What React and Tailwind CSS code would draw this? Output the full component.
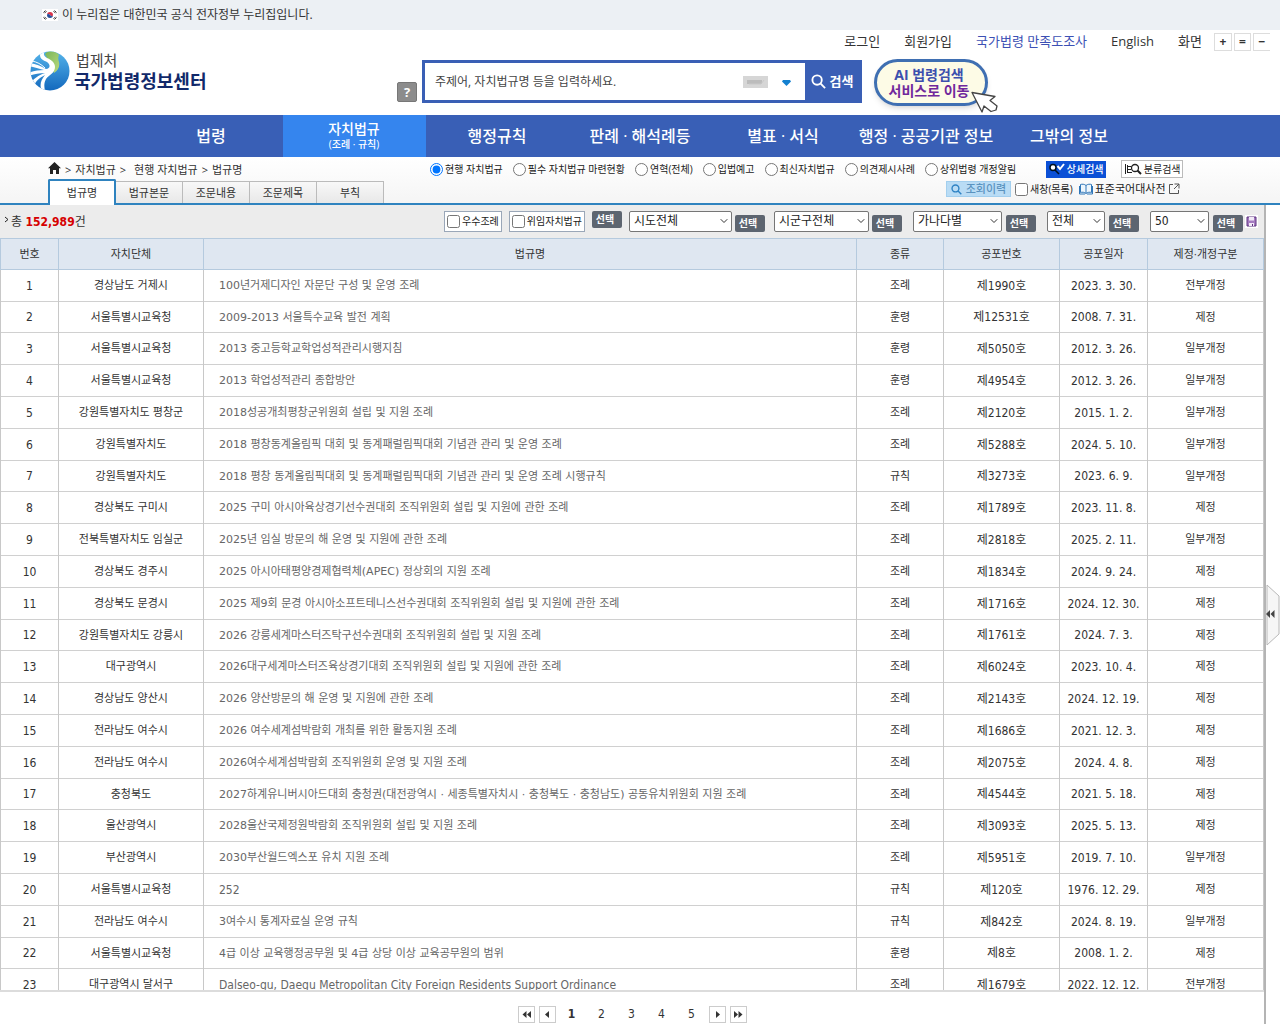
import React from 'react';
import { ChevronDown } from 'lucide-react';

const NAV = ['법령', '자치법규', '행정규칙', '판례 · 해석례등', '별표 · 서식', '행정 · 공공기관 정보', '그밖의 정보'];

const TABS = ['법규명', '법규본문', '조문내용', '조문제목', '부칙'];

const SCOPES = ['현행 자치법규', '필수 자치법규 마련현황', '연혁(전체)', '입법예고', '최신자치법규', '의견제시사례', '상위법령 개정알림'];

const ROWS = [
  ['경상남도 거제시', '100년거제디자인 자문단 구성 및 운영 조례', '조례', '제1990호', '2023. 3. 30.', '전부개정'],
  ['서울특별시교육청', '2009-2013 서울특수교육 발전 계획', '훈령', '제12531호', '2008. 7. 31.', '제정'],
  ['서울특별시교육청', '2013 중고등학교학업성적관리시행지침', '훈령', '제5050호', '2012. 3. 26.', '일부개정'],
  ['서울특별시교육청', '2013 학업성적관리 종합방안', '훈령', '제4954호', '2012. 3. 26.', '일부개정'],
  ['강원특별자치도 평창군', '2018성공개최평창군위원회 설립 및 지원 조례', '조례', '제2120호', '2015. 1. 2.', '일부개정'],
  ['강원특별자치도', '2018 평창동계올림픽 대회 및 동계패럴림픽대회 기념관 관리 및 운영 조례', '조례', '제5288호', '2024. 5. 10.', '일부개정'],
  ['강원특별자치도', '2018 평창 동계올림픽대회 및 동계패럴림픽대회 기념관 관리 및 운영 조례 시행규칙', '규칙', '제3273호', '2023. 6. 9.', '일부개정'],
  ['경상북도 구미시', '2025 구미 아시아육상경기선수권대회 조직위원회 설립 및 지원에 관한 조례', '조례', '제1789호', '2023. 11. 8.', '제정'],
  ['전북특별자치도 임실군', '2025년 임실 방문의 해 운영 및 지원에 관한 조례', '조례', '제2818호', '2025. 2. 11.', '일부개정'],
  ['경상북도 경주시', '2025 아시아태평양경제협력체(APEC) 정상회의 지원 조례', '조례', '제1834호', '2024. 9. 24.', '제정'],
  ['경상북도 문경시', '2025 제9회 문경 아시아소프트테니스선수권대회 조직위원회 설립 및 지원에 관한 조례', '조례', '제1716호', '2024. 12. 30.', '제정'],
  ['강원특별자치도 강릉시', '2026 강릉세계마스터즈탁구선수권대회 조직위원회 설립 및 지원 조례', '조례', '제1761호', '2024. 7. 3.', '제정'],
  ['대구광역시', '2026대구세계마스터즈육상경기대회 조직위원회 설립 및 지원에 관한 조례', '조례', '제6024호', '2023. 10. 4.', '제정'],
  ['경상남도 양산시', '2026 양산방문의 해 운영 및 지원에 관한 조례', '조례', '제2143호', '2024. 12. 19.', '제정'],
  ['전라남도 여수시', '2026 여수세계섬박람회 개최를 위한 활동지원 조례', '조례', '제1686호', '2021. 12. 3.', '제정'],
  ['전라남도 여수시', '2026여수세계섬박람회 조직위원회 운영 및 지원 조례', '조례', '제2075호', '2024. 4. 8.', '제정'],
  ['충청북도', '2027하계유니버시아드대회 충청권(대전광역시 · 세종특별자치시 · 충청북도 · 충청남도) 공동유치위원회 지원 조례', '조례', '제4544호', '2021. 5. 18.', '제정'],
  ['울산광역시', '2028울산국제정원박람회 조직위원회 설립 및 지원 조례', '조례', '제3093호', '2025. 5. 13.', '제정'],
  ['부산광역시', '2030부산월드엑스포 유치 지원 조례', '조례', '제5951호', '2019. 7. 10.', '일부개정'],
  ['서울특별시교육청', '252', '규칙', '제120호', '1976. 12. 29.', '제정'],
  ['전라남도 여수시', '3여수시 통계자료실 운영 규칙', '규칙', '제842호', '2024. 8. 19.', '일부개정'],
  ['서울특별시교육청', '4급 이상 교육행정공무원 및 4급 상당 이상 교육공무원의 범위', '훈령', '제8호', '2008. 1. 2.', '제정'],
  ['대구광역시 달서구', 'Dalseo-gu, Daegu Metropolitan City Foreign Residents Support Ordinance', '조례', '제1679호', '2022. 12. 12.', '전부개정'],
];

const hasHangul = (text) => /[가-힣]/.test(text);

const Flag = () => (
  <svg width="16" height="12" viewBox="0 0 16 12" aria-hidden="true">
    <rect width="16" height="12" fill="#fff" />
    <path d="M5 6a3 3 0 0 1 6 0c0 1.5-2 1.5-3 0s-3-1.500-3 0z" fill="#d8354a" />
    <path d="M5 6c0-1.500 2-1.500 3 0s3 1.500 3 0a3 3 0 0 1-6 0z" fill="#27509b" />
    <path d="M1.500 3.500l2-2M2.500 4.200l2-2M12.500 1.500l2 2M11.500 2.200l2 2M1.500 8.500l2 2M2.500 7.800l2 2M12.500 10.500l2-2M11.500 9.800l2-2" stroke="#222" strokeWidth="0.900" />
  </svg>
);

const Emblem = () => (
  <svg width="40" height="40" viewBox="0 0 40 40" aria-hidden="true">
    <defs>
      <linearGradient id="sea" x1="0" y1="0" x2="0" y2="1">
        <stop offset="0" stopColor="#55b4ea" />
        <stop offset="1" stopColor="#1268bd" />
      </linearGradient>
      <linearGradient id="leaf" x1="0" y1="0" x2="1" y2="1">
        <stop offset="0" stopColor="#79b558" />
        <stop offset="1" stopColor="#b9d97e" />
      </linearGradient>
      <clipPath id="disc"><circle cx="20" cy="20" r="19.500" /></clipPath>
    </defs>
    <g clipPath="url(#disc)">
      <rect width="40" height="40" fill="url(#sea)" />
      <path d="M15 3C18-1 25-1 29 4c-1 2-1 4 0 7 1 5-1 8-5 11l-3-8z" fill="url(#leaf)" />
      <path d="M16-1c-3 3-3 6 1 8 5 2 8 5 8 9 0 6-6 8-9 12-2 4-2 7-1 12h-3c-3-6-1-11 3-16-6 3-9 6-11 11l-3-3c3-5 8-8 14-10-6 0-11 1-16 3l-1-3c5-2 11-3 16-3C10 18 5 16-1 15l1-3c6 1 11 3 16 6 4 0 5-4 1-7-4-2-7-3-7-7 0-2 2-4 4-5z" fill="#fff" />
      <path d="M2 10c5 1 9 3 13 7" stroke="#fff" strokeWidth="1" fill="none" />
    </g>
  </svg>
);

const SearchGlyph = ({ className }) => (
  <svg className={className} viewBox="0 0 16 16" fill="none" stroke="currentColor" strokeWidth="2" aria-hidden="true">
    <circle cx="6.500" cy="6.500" r="5" />
    <path d="M10.300 10.300L15 15" />
  </svg>
);

const SelectBtn = ({ raised }) => (
  <button className={`h-[17px] w-[30px] rounded-xs bg-[#5d6570] pr-1 text-[10px] leading-[15px] font-bold text-white ${raised ? 'mb-1' : '-mb-1'}`}>
    선택
  </button>
);

const Dropdown = ({ label, value, className }) => (
  <div className={`relative ${className}`}>
    <select aria-label={label} className="block h-[21px] w-full appearance-none rounded-xs border border-[#767676] bg-white pl-1 text-xs leading-[17px] text-[#222]">
      <option>{value}</option>
    </select>
    <ChevronDown className="pointer-events-none absolute top-1 right-0.5 h-3 w-3 text-[#333]" strokeWidth={2} />
  </div>
);

const Arrow = ({ double, flip }) => (
  <svg width="9" height="7" viewBox="0 0 9 7" fill="#333" className={flip ? 'rotate-180' : ''} aria-hidden="true">
    {double ? <path d="M4.500 0v7L0.500 3.500zM9 0v7L5 3.500z" /> : <path d="M6 0v7L2 3.500z" />}
  </svg>
);

const PageBtn = ({ label, double, flip, className }) => (
  <button aria-label={label} className={`flex h-[17px] w-[17px] items-center justify-center border border-[#ccc] bg-white ${className || ''}`}>
    <Arrow double={double} flip={flip} />
  </button>
);

const Header = () => (
  <header className="flex h-[85px] shrink-0 pr-2.5 pl-[30px]">
    <a href="#home" className="mt-[21px] flex w-[367px] shrink-0 items-start">
      <Emblem />
      <span className="ml-1 flex flex-col text-[#12296a]">
        <span className="pl-0.5 text-[15px] leading-[18px] text-[#444]">법제처</span>
        <span className="text-lg leading-6 font-bold">국가법령정보센터</span>
      </span>
    </a>
    <div className="flex flex-1 flex-col">
      <nav className="flex h-[23px] items-center justify-end text-[13px] text-[#333]">
        <a href="#login">로그인</a>
        <a href="#join" className="ml-6">회원가입</a>
        <a href="#survey" className="ml-6 text-[#3c50b4]">국가법령 만족도조사</a>
        <a href="#en" className="ml-6">English</a>
        <span className="mr-3 ml-6">화면</span>
        <span className="flex gap-0.5 text-xs font-bold">
          <button aria-label="확대" className="h-[18px] w-[18px] border border-[#ddd] leading-none">+</button>
          <button aria-label="기본" className="h-[18px] w-[17px] border border-[#ddd] leading-none">=</button>
          <button aria-label="축소" className="h-[18px] w-[17px] border border-r-0 border-[#ddd] leading-none">−</button>
        </span>
      </nav>
      <div className="mt-1.5 flex">
        <button aria-label="도움말" className="mt-[23px] mr-[5px] h-5 w-5 rounded-xs border border-[#777] bg-[#8c8c8c] text-[13px] leading-none font-bold text-white">?</button>
        <form className="mt-px flex h-[43px] w-[440px] border-3 border-[#3a5fb5] bg-white">
          <input aria-label="검색어" placeholder="주제어, 자치법규명 등을 입력하세요." className="min-w-0 flex-1 pl-2.5 text-xs text-[#333] outline-none placeholder:text-[#444]" />
          <button type="button" aria-label="키보드" className="mt-[13px] h-3 w-[25px] bg-[#d6d6d6]">
            <svg width="25" height="12" viewBox="0 0 25 12" aria-hidden="true">
              <path d="M4 4h15v4H4z" fill="#bcbcbc" /><path d="M6 8h12l3-4" stroke="#c8c8c8" fill="none" />
            </svg>
          </button>
          <button type="button" aria-label="펼치기" className="mr-3.5 ml-3.5 pt-0.5">
            <svg width="9" height="6" viewBox="0 0 9 6" aria-hidden="true"><path d="M1 0h7l1 1.500L4.500 6 0 1.500z" fill="#1380d0" /></svg>
          </button>
          <button type="button" className="flex w-[54px] items-center justify-center gap-1 bg-[#3a5fb5] text-[13px] font-bold text-white">
            <SearchGlyph className="h-[15px] w-[15px]" />
            검색
          </button>
        </form>
        <button className="relative ml-3 h-[47px] w-[114px] rounded-full border-3 border-[#3f6fb2] bg-[#fdfbe6] pr-1 text-sm leading-4 font-bold shadow-md">
          <span className="block text-[#3c4fae]">AI 법령검색</span>
          <span className="block text-[#70289c]">서비스로 이동</span>
          <svg className="absolute -right-3.5 -bottom-2.5" width="28" height="22" viewBox="0 0 28 22" aria-hidden="true">
            <path d="M1 1.500L24 5.500l-5 4 7 5.500-1 4-5 1.500-7-5.500-2 6z" fill="#fff" stroke="#444" strokeWidth="1.300" strokeLinejoin="round" />
          </svg>
        </button>
      </div>
    </div>
  </header>
);

const MainNav = () => (
  <nav className="flex h-[42px] shrink-0 justify-center bg-[#395fb6] text-base text-white">
    {NAV.map((name) =>
      name === '자치법규' ? (
        <a key={name} href="#ordin" className="flex w-[143px] flex-col items-center justify-center bg-[#3585ee] text-sm leading-4 font-medium">
          {name}
          <span className="text-[10px] leading-[14px]">(조례 · 규칙)</span>
        </a>
      ) : (
        <a key={name} href="#menu" className="flex w-[143px] items-center justify-center font-medium whitespace-nowrap">
          {name}
        </a>
      )
    )}
  </nav>
);

const SubBar = () => (
  <section className="flex h-12 shrink-0 justify-between border-b-2 border-[#2f83bf] bg-gradient-to-b from-white to-[#f5f5f5]">
    <div className="flex w-[384px] shrink-0 flex-col pl-12 text-[11px] text-[#333]">
      <div className="flex h-[22px] shrink-0 items-center gap-1 pt-1">
        <svg width="13" height="12" viewBox="0 0 13 12" fill="#222" className="mb-1" aria-label="홈">
          <path d="M6.500 0L13 6.200h-2V12H8V8H5v4H2V6.200H0z" />
        </svg>
        <span>&gt;</span><a href="#a">자치법규</a><span>&gt;</span>
        <a href="#b" className="pl-1">현행 자치법규</a><span>&gt;</span><a href="#c">법규명</a>
      </div>
      <div className="flex h-[26px] shrink-0 items-end">
        {TABS.map((tab, i) => (
          <button
            key={tab}
            className={i === 0
              ? 'h-[26px] w-[68px] shrink-0 rounded-t-xs border-2 border-b-0 border-[#2f83bf] bg-white'
              : 'mb-0.5 h-[22px] w-[67px] shrink-0 border-t border-r border-[#bbb] bg-gradient-to-b from-[#f8f8f8] to-[#e8e8e8] pt-0.5'}
          >
            {tab}
          </button>
        ))}
      </div>
    </div>
    <div className="flex flex-1 flex-col pl-[46px]">
      <div className="flex h-6 items-center text-[10px] whitespace-nowrap text-[#222]">
        {SCOPES.map((scope, i) => (
          <label key={scope} className="mr-2.5 flex items-center gap-0.5">
            <input type="radio" name="scope" defaultChecked={i === 0} className="h-[13px] w-[13px]" />
            {scope}
          </label>
        ))}
        <button className="ml-5 flex h-[17px] w-[60px] items-center justify-center gap-0.5 bg-[#0b50d6] font-medium text-white">
          <svg width="16" height="12" viewBox="0 0 16 12" fill="none" aria-hidden="true">
            <circle cx="4" cy="4.500" r="3" stroke="#012" strokeWidth="1.500" fill="#fff" /><path d="M6 7l4 4" stroke="#012" strokeWidth="1.600" />
            <path d="M8.500 3l2.500 3 4-5" stroke="#fff" strokeWidth="2" />
          </svg>
          상세검색
        </button>
        <button className="ml-[15px] flex h-[18px] w-[62px] items-center justify-center gap-px border border-[#bbb] bg-white">
          <svg width="19" height="12" viewBox="0 0 19 12" fill="none" stroke="#222" aria-hidden="true">
            <path d="M1.500 1v10M3.500 2v8M3.500 3.500H7M3.500 6.500H7M3.500 9.500H8" />
            <circle cx="11" cy="5" r="3.500" strokeWidth="1.300" /><path d="M13.500 7.500L17 11" strokeWidth="2" />
          </svg>
          분류검색
        </button>
      </div>
      <div className="ml-[516px] flex h-4 items-center text-[11px] whitespace-nowrap text-[#222]">
        <button className="flex h-4 w-[65px] items-center justify-center gap-1 border border-[#a3cfee] bg-[#b9dcf5] font-medium text-[#5b93bf]">
          <SearchGlyph className="h-[11px] w-[11px] text-[#2f83c4]" />
          조회이력
        </button>
        <label className="ml-1 flex items-center gap-0.5 text-[10px]">
          <input type="checkbox" className="h-[13px] w-[13px]" />
          새창(목록)
        </label>
        <a href="#dict" className="ml-1.5 flex items-center">
          <svg width="14" height="12" viewBox="0 0 14 12" fill="#eef6fc" stroke="#2f76b8" className="mr-0.5" aria-hidden="true">
            <path d="M7 2.500C5.500 1 3 1 1.500 1.500v8C3 9 5.500 9 7 10.500 8.500 9 11 9 12.500 9.500v-8C11 1 8.500 1 7 2.500zM7 2.500v8M0.500 3v8H6M13.500 3v8H8" />
          </svg>
          표준국어대사전
          <svg width="12" height="12" viewBox="0 0 12 12" fill="none" stroke="#555" className="ml-0.5" aria-hidden="true">
            <path d="M5 1.500H1.500v9h9V7M6.500 1H11v4.500M11 1L6 6" />
          </svg>
        </a>
      </div>
    </div>
  </section>
);

const Toolbar = () => (
  <div className="flex h-[33px] shrink-0 items-center justify-between bg-[#ececec] pr-1.5 pl-1">
    <p className="flex items-center text-xs text-[#333]">
      <svg width="5" height="7" viewBox="0 0 5 7" fill="none" stroke="#222" className="mr-0.5 mb-1" aria-hidden="true"><path d="M1 1l3 2.500L1 6" /></svg>
      총&nbsp;<strong className="text-[#d60000]">152,989</strong>건
    </p>
    <div className="flex items-center text-[10px] whitespace-nowrap text-[#222]">
      <label className="flex h-[21px] items-center gap-0.5 border border-[#9aa7b8] bg-white px-0.5">
        <input type="checkbox" className="h-[13px] w-[13px]" />우수조례
      </label>
      <label className="mx-[7px] flex h-[21px] items-center gap-0.5 border border-[#9aa7b8] bg-white px-0.5">
        <input type="checkbox" className="h-[13px] w-[13px]" />위임자치법규
      </label>
      <SelectBtn raised />
      <Dropdown label="시도" value="시도전체" className="mr-[3px] ml-[7px] w-[103px]" />
      <SelectBtn />
      <Dropdown label="시군구" value="시군구전체" className="mr-[3px] ml-[9px] w-[95px]" />
      <SelectBtn />
      <Dropdown label="가나다" value="가나다별" className="mr-1 ml-[11px] w-[89px]" />
      <SelectBtn />
      <Dropdown label="종류" value="전체" className="mr-1 ml-[11px] w-[58px]" />
      <SelectBtn />
      <Dropdown label="목록수" value="50" className="mr-1 ml-[11px] w-[59px]" />
      <SelectBtn />
      <button aria-label="저장" className="ml-0.5">
        <svg width="13" height="13" viewBox="0 0 13 13" aria-hidden="true">
          <rect width="13" height="13" fill="#fff" />
          <path d="M2 2h9v9H2z" fill="#a57bc0" stroke="#5c3380" /><path d="M4 2h5v3.500H4zM4 8h5v3H4z" fill="#f1e9f6" /><path d="M7 9h1v2H7z" fill="#5c3380" />
        </svg>
      </button>
    </div>
  </div>
);

const List = () => (
  <div className="min-h-0 flex-1 overflow-hidden border-b-2 border-[#dcdcdc]">
    <table className="w-full table-fixed border-collapse text-[11px] text-[#333]">
      <colgroup>
        <col className="w-[58px]" />
        <col className="w-[145px]" />
        <col />
        <col className="w-[87px]" />
        <col className="w-[116px]" />
        <col className="w-[88px]" />
        <col className="w-[116px]" />
      </colgroup>
      <thead>
        <tr className="h-[31px] border-y border-[#b5cade] bg-[#dfe7f1]">
          {['번호', '자치단체', '법규명', '종류', '공포번호', '공포일자', '제정·개정구분'].map((h) => (
            <th key={h} scope="col" className="border-x border-[#b5cade] p-0 pt-0.5 font-normal">{h}</th>
          ))}
        </tr>
      </thead>
      <tbody>
        {ROWS.map(([org, title, kind, no, date, change], i) => (
          <tr key={no} className="h-8 border-b border-[#d0d0d0] text-center nth-[5n+2]:h-[31px] [&>td]:border-x [&>td]:border-[#c8c8c8] [&>td]:p-0">
            <td className="text-xs">{i + 1}</td>
            <td><span className="block pt-0.5">{org}</span></td>
            <td className="text-left text-[#666]">
              <a
                href="#view"
                className={hasHangul(title)
                  ? "block truncate pt-0.5 pl-[15px] font-['DejaVu_Sans','Noto_Sans_CJK_KR',sans-serif]"
                  : 'block truncate pl-[15px] text-xs'}
              >
                {title}
              </a>
            </td>
            <td><span className="block pt-0.5">{kind}</span></td>
            <td className="text-xs">{no}</td>
            <td className="text-xs">{date}</td>
            <td><span className="block pt-0.5">{change}</span></td>
          </tr>
        ))}
      </tbody>
    </table>
  </div>
);

const Pager = () => (
  <nav className="flex h-8 shrink-0 items-center justify-center pt-3 text-xs text-[#333]">
    <PageBtn label="처음" double />
    <PageBtn label="이전" className="mr-px ml-1" />
    {[1, 2, 3, 4, 5].map((n) => (
      <a key={n} href="#page" className={n === 1 ? 'w-[30px] text-center font-bold' : 'w-[30px] text-center'}>{n}</a>
    ))}
    <PageBtn label="다음" flip className="mr-1 ml-0.5" />
    <PageBtn label="마지막" double flip />
  </nav>
);

export default function App() {
  return (
    <div className="flex h-screen flex-col overflow-hidden bg-white font-['Open_Sans','Noto_Sans_CJK_KR',sans-serif]">
      <div className="flex h-[30px] shrink-0 items-center gap-1 bg-[#ecf0f4] pl-[42px] text-xs text-[#333]">
        <Flag />
        이 누리집은 대한민국 공식 전자정부 누리집입니다.
      </div>
      <Header />
      <MainNav />
      <SubBar />
      <div className="flex min-h-0 flex-1">
        <main className="flex min-w-0 flex-1 flex-col border-r-2 border-[#b4b4b4] font-['DejaVu_Sans_Condensed','Noto_Sans_CJK_KR',sans-serif]">
          <Toolbar />
          <List />
          <Pager />
        </main>
        <aside className="flex w-[14px] shrink-0 items-center">
          <button aria-label="목록 열기">
            <svg width="14" height="62" viewBox="0 0 14 62" aria-hidden="true">
              <path d="M1 1l12 11v38L1 61z" fill="#f6f6f6" stroke="#b8b8b8" />
              <path d="M4 26v8L0 30zM8.500 26v8L4.500 30z" fill="#444" />
            </svg>
          </button>
        </aside>
      </div>
    </div>
  );
}
